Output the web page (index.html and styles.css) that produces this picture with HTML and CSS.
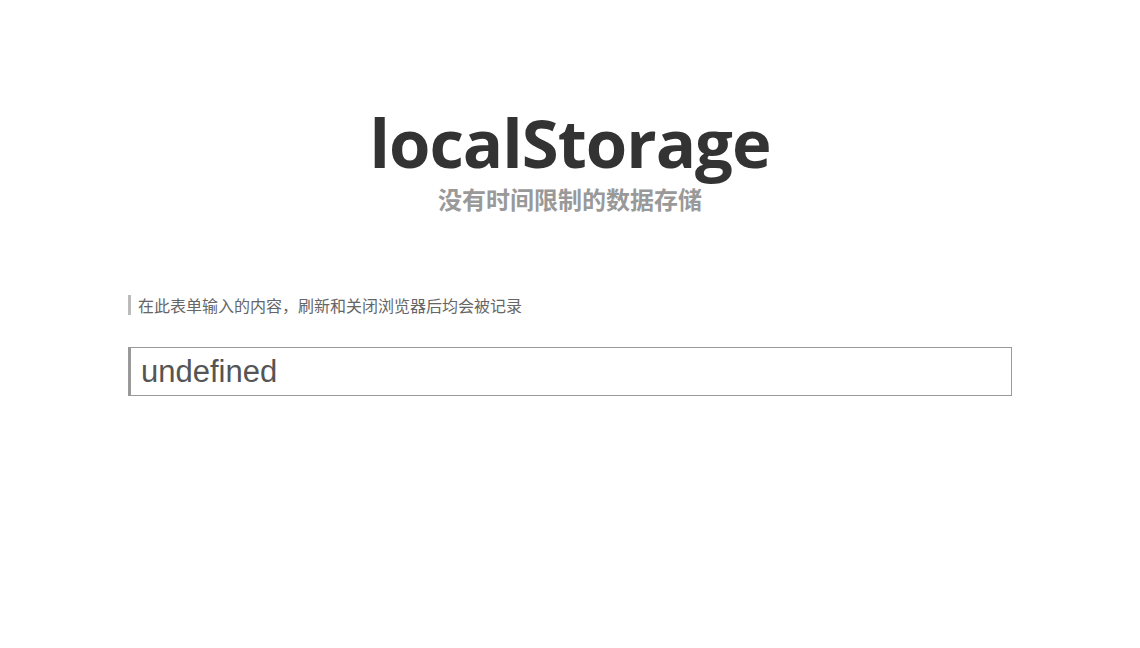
FILE: index.html
```html
<!DOCTYPE html>
<html lang="zh-CN">
<head>
<meta charset="utf-8">
<title>localStorage</title>
<link rel="stylesheet" href="styles.css">
</head>
<body>
<div class="page">
  <header class="hero">
    <h1 class="title">localStorage</h1>
    <p class="subtitle">没有时间限制的数据存储</p>
  </header>
  <p class="note">在此表单输入的内容，刷新和关闭浏览器后均会被记录</p>
  <input class="field" type="text" value="undefined">
</div>
</body>
</html>
```

FILE: styles.css
```css
html, body {
  margin: 0;
  padding: 0;
  background: #fff;
}
body {
  font-family: "Open Sans", "Noto Sans CJK SC", sans-serif;
}
.page {
  width: 884px;
  margin: 0 auto;
  padding-top: 102px;
}
.hero {
  text-align: center;
}
.title {
  margin: 0;
  font-size: 67px;
  line-height: 80px;
  font-weight: 700;
  color: #333;
  letter-spacing: -1px;
}
.subtitle {
  margin: 3px 0 0;
  font-family: "Noto Sans CJK SC", sans-serif;
  font-size: 24px;
  line-height: 28px;
  font-weight: 700;
  color: #999;
}
.note {
  margin: 82px 0 0;
  padding-left: 7px;
  border-left: 3px solid #bbb;
  font-family: "Noto Sans CJK SC", sans-serif;
  font-size: 16px;
  line-height: 20px;
  color: #666;
}
.field {
  display: block;
  box-sizing: border-box;
  width: 884px;
  height: 49px;
  margin-top: 32px;
  padding: 0 10px;
  border: 1px solid #999;
  border-left: 3px solid #999;
  font-family: "Liberation Sans", Arial, sans-serif;
  font-size: 31px;
  color: #555;
  outline: none;
}
```
